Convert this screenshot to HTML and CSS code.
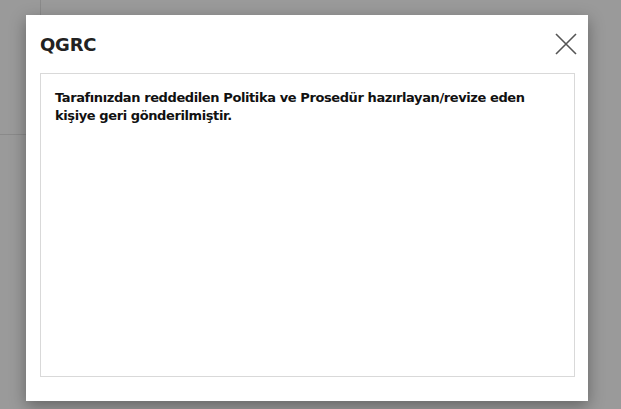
FILE: index.html
```html
<!DOCTYPE html>
<html lang="tr">
<head>
<meta charset="utf-8">
<title>QGRC</title>
<link rel="stylesheet" href="styles.css">
</head>
<body>
<div class="backdrop">
  <div class="page-frame"></div>
</div>
<div class="modal">
  <div class="modal-header">
    <h1 class="modal-title">QGRC</h1>
    <button class="modal-close" aria-label="Kapat">
      <svg width="22" height="22" viewBox="0 0 22 22"><path d="M1 1L21 21M21 1L1 21" stroke="#555" stroke-width="1.6" fill="none"/></svg>
    </button>
  </div>
  <div class="modal-body">
    <p class="message">Tarafınızdan reddedilen Politika ve Prosedür hazırlayan/revize eden kişiye geri gönderilmiştir.</p>
  </div>
</div>
</body>
</html>
```
FILE: styles.css
```css
html, body {
  margin: 0;
  padding: 0;
  width: 621px;
  height: 409px;
  overflow: hidden;
}
body {
  background: #9a9a9a;
  font-family: "DejaVu Sans", Verdana, sans-serif;
  position: relative;
}
.backdrop {
  position: absolute;
  inset: 0;
}
.page-frame {
  position: absolute;
  left: -1px;
  top: -1px;
  width: 41px;
  height: 135px;
  border-right: 1px solid #8a8a8a;
  border-bottom: 1px solid #8a8a8a;
}
.modal {
  position: absolute;
  left: 26px;
  top: 15px;
  width: 562px;
  height: 386px;
  background: #fff;
  box-shadow: 0 5px 15px rgba(0,0,0,0.35);
  box-sizing: border-box;
  padding: 0 13px 24px 14px;
  display: flex;
  flex-direction: column;
}
.modal-header {
  height: 58px;
  display: flex;
  align-items: center;
  justify-content: space-between;
  flex: none;
}
.modal-title {
  margin: 0;
  font-size: 18px;
  font-weight: bold;
  color: #222;
  padding-top: 1px;
  letter-spacing: -0.2px;
}
.modal-close {
  border: 0;
  background: none;
  padding: 0;
  margin: 0 -2px 0 0;
  width: 22px;
  height: 22px;
  display: flex;
  cursor: pointer;
}
.modal-body {
  flex: 1;
  border: 1px solid #d9d9d9;
  padding: 15px 24px 14px 14px;
}
.message {
  margin: 0;
  font-size: 13px;
  line-height: 18px;
  font-weight: bold;
  color: #111;
  letter-spacing: -0.4px;
}
```
